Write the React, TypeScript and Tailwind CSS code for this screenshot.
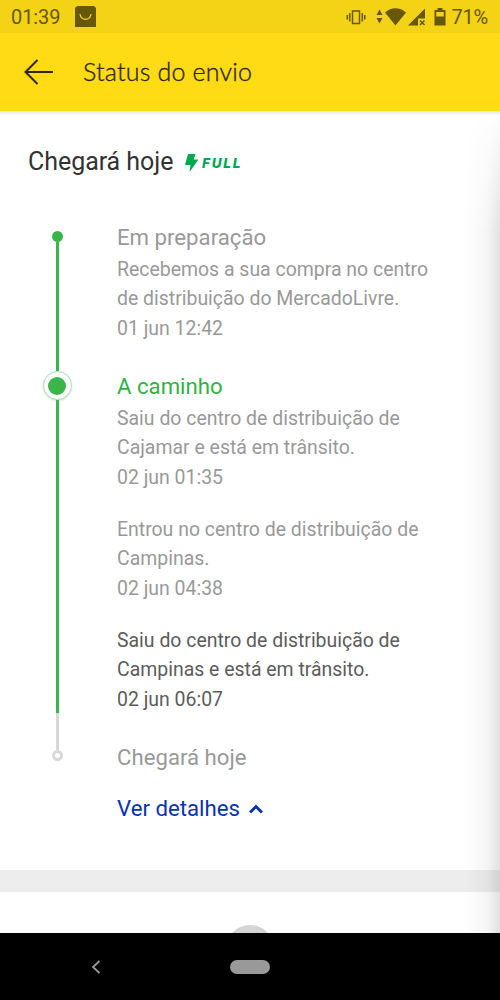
type Update = { lines: string[]; date: string; current?: boolean };

type Step = {
    title: string;
    titleClass: string;
    updates: Update[];
};

const steps: Step[] = [
    {
        title: 'Em preparação',
        titleClass: 'text-[#999]',
        updates: [
            {
                lines: ['Recebemos a sua compra no centro', 'de distribuição do MercadoLivre.'],
                date: '01 jun 12:42',
            },
        ],
    },
    {
        title: 'A caminho',
        titleClass: 'text-[#2fb344]',
        updates: [
            {
                lines: ['Saiu do centro de distribuição de', 'Cajamar e está em trânsito.'],
                date: '02 jun 01:35',
            },
            {
                lines: ['Entrou no centro de distribuição de', 'Campinas.'],
                date: '02 jun 04:38',
            },
            {
                lines: ['Saiu do centro de distribuição de', 'Campinas e está em trânsito.'],
                date: '02 jun 06:07',
                current: true,
            },
        ],
    },
    { title: 'Chegará hoje', titleClass: 'text-[#999]', updates: [] },
];

export default function App() {
    return (
        <div className="relative flex h-[1000px] w-[500px] flex-col overflow-hidden bg-white font-['Roboto',sans-serif]">
            <StatusBar />
            <Header />
            <main className="relative h-[822px] overflow-hidden">
                <ShippingStatus />
                <div className="mt-[46px] h-[22px] bg-[#ededed]" />
                <div className="mx-auto mt-[33px] h-[48px] w-[48px] rounded-full bg-[#d4d4d4]" />
                <div className="absolute inset-x-0 top-0 h-[5px] bg-linear-to-b from-black/10 to-transparent" />
                {/* Edge shadow */}
                <div className="absolute top-0 right-0 h-full w-9 bg-linear-to-l from-black/12 via-black/4 via-35% to-transparent mask-t-from-[700px] mask-t-to-[822px]" />
            </main>
            <NavigationBar />
        </div>
    );
}

function StatusBar() {
    return (
        <div className="flex h-[33px] shrink-0 items-center bg-[#f4d216] pt-px pr-[12px] pl-[11px] text-[20px] text-[#665709]">
            <span className="w-[64px] tracking-[-0.1px]">01:39</span>
            <svg className="mb-[2px]" width="21" height="21" viewBox="0 0 21 21">
                <path d="M2 0h17l2 2v19H0V2z" fill="currentColor" />
                <path d="M5 8c1 7 10 7 11 0" fill="none" stroke="#f4d216" strokeWidth="1.3" />
            </svg>
            <svg className="ml-auto" width="103" height="22" viewBox="0 0 103 22" fill="currentColor">
                <path d="M7.500 5h7v12.500h-7zM4.700 7v8.500M17.300 7v8.500M2.300 9v4.500M19.800 9v4.500" fill="none" stroke="currentColor" strokeWidth="1.500" />
                <path d="M31.500 9h6l-3-5.500zM31.500 12h6l-3 5.500z" />
                <path d="M40 6.500c6-5.700 15-5.700 21 0L50.500 19.500z" />
                <path d="M80 2.500v10h-7v7H63z" />
                <path d="M75 14.500l4.500 4.500m0-4.500l-4.500 4.500" fill="none" stroke="currentColor" strokeWidth="1.500" />
                <path fillRule="evenodd" d="M92.500 2h5v2h3v15.500h-11V4h3zM91.200 6v4.500h7.600V6z" />
            </svg>
            <span className="ml-[3px] tracking-[-0.2px]">71%</span>
        </div>
    );
}

function Header() {
    return (
        <header className="flex h-[78px] shrink-0 items-center bg-[#ffdb15] pl-[24px] text-[#2d270a]">
            <svg width="29" height="26" viewBox="0 0 29 26" fill="none" stroke="currentColor" strokeWidth="2">
                <path d="M13.500 1L1.500 13l12 12M1.500 13H29" />
            </svg>
            <h1 className="ml-[30px] font-['Lato'] text-[25px] font-light tracking-[0.2px] whitespace-nowrap [-webkit-text-stroke:0.35px_currentColor]">
                Status do envio
            </h1>
        </header>
    );
}

function ShippingStatus() {
    return (
        <section className="h-[713px] pt-[34px]">
            <div className="flex h-[34px] items-center pl-[28px]">
                <h2 className="w-[157px] text-[25px] tracking-[-0.05px] whitespace-nowrap text-[#333]">Chegará hoje</h2>
                <FullBadge />
            </div>
            <div className="mt-[42px] flex">
                <Rail />
                <div className="pt-px text-[19.45px] whitespace-nowrap">
                    {steps.map((step) => (
                        <div key={step.title} className="mb-[27px]">
                            <h3 className={`h-8 text-[22.2px] leading-[30px] ${step.titleClass}`}>{step.title}</h3>
                            <div className="flex flex-col gap-[21px]">
                                {step.updates.map((update) => (
                                    <StepUpdate key={update.date} {...update} />
                                ))}
                            </div>
                        </div>
                    ))}
                    <button className="-mt-[8px] flex h-8 items-center text-[22.2px] text-[#0a32b4]">
                        <span className="w-[132px] text-left">Ver detalhes</span>
                        <svg width="14" height="10" viewBox="0 0 14 10" fill="none" stroke="currentColor" strokeWidth="3">
                            <path d="M1 8.500l6-6 6 6" />
                        </svg>
                    </button>
                </div>
            </div>
        </section>
    );
}

function FullBadge() {
    return (
        <div className="flex items-center pt-[2px] text-[#00a650]">
            <svg width="14" height="18" viewBox="0 0 14 18" fill="currentColor">
                <path d="M3 0h7.500L8.700 5.500H13.500L4.500 18l1-7H0z" />
            </svg>
            <span className="ml-[3px] font-['Inter'] text-[13.500px] font-extrabold tracking-[1.8px] italic">FULL</span>
        </div>
    );
}

function StepUpdate({ lines, date, current }: Update) {
    return (
        <div className={current ? 'text-[#5c5c5c]' : 'text-[#999]'}>
            {lines.map((line) => (
                <p key={line} className="h-[29px] leading-[31px]">{line}</p>
            ))}
            <p className="h-[32px] leading-[34px]">{date}</p>
        </div>
    );
}

function Rail() {
    return (
        <div className="flex w-[117px] flex-col items-center pt-[10px] pr-[3px]">
            <div className="size-[11px] rounded-full bg-[#39b54a]" />
            <div className="h-[129px] w-[3px] bg-[#39b54a]" />
            <div className="flex size-[29px] items-center justify-center rounded-full border border-[#a9dfb0] bg-white shadow-sm">
                <div className="size-[18px] rounded-full bg-[#39b54a]" />
            </div>
            <div className="h-[313px] w-[3px] bg-[#39b54a]" />
            <div className="h-[37px] w-[3px] bg-[#d8d8d8]" />
            <div className="size-[11px] rounded-full border-3 border-[#d8d8d8] bg-white" />
        </div>
    );
}

function NavigationBar() {
    return (
        <nav className="flex h-[67px] shrink-0 items-center bg-black pl-[91px]">
            <svg width="10" height="14" viewBox="0 0 10 14" fill="none" stroke="#999" strokeWidth="1.800">
                <path d="M8.500 1L2 7l6.500 6" />
            </svg>
            <div className="ml-[129px] h-[14px] w-[40px] rounded-full bg-[#999]" />
        </nav>
    );
}
